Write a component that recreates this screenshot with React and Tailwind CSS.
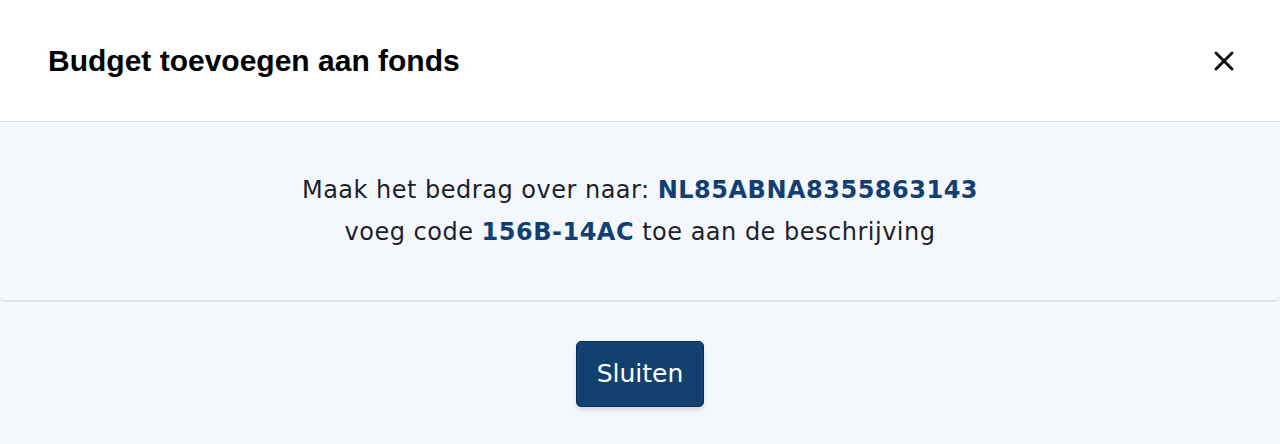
import React from "react";
import { X } from "lucide-react";

export default function App() {
  return (
    <div className="h-[444px] w-full flex flex-col bg-[#f4f7fb] overflow-hidden">
      {/* Header */}
      <div className="h-[122px] shrink-0 bg-white border-b border-[#d9dce1] flex items-center justify-between pl-12 pr-[40px]">
        <h2 className="text-[30px] font-bold text-black font-['Liberation_Sans',Arial,sans-serif]">
          Budget toevoegen aan fonds
        </h2>
        <button className="w-8 h-8 flex items-center justify-center text-[#111]">
          <X className="w-[36px] h-[36px]" strokeWidth={2.2} />
        </button>
      </div>

      {/* Body */}
      <div className="h-[180px] shrink-0 bg-[#f4f7fb] rounded-b-md border-b-2 border-[#dfe2e6] flex flex-col items-center justify-center text-[24px] tracking-[0.5px] leading-[42px] text-[#1d1f2b] font-['DejaVu_Sans',sans-serif]">
        <p>
          Maak het bedrag over naar:{" "}
          <span className="font-bold text-[#123f73]">NL85ABNA8355863143</span>
        </p>
        <p>
          voeg code <span className="font-bold text-[#123f73]">156B-14AC</span> toe aan de beschrijving
        </p>
      </div>

      {/* Footer */}
      <div className="flex-1 flex justify-center pt-[39px]">
        <button className="w-[128px] h-[66px] rounded-[5px] bg-[#12416f] border border-[#0c2e5e] text-white text-[25px] shadow-md font-['DejaVu_Sans',sans-serif]">
          Sluiten
        </button>
      </div>
    </div>
  );
}
